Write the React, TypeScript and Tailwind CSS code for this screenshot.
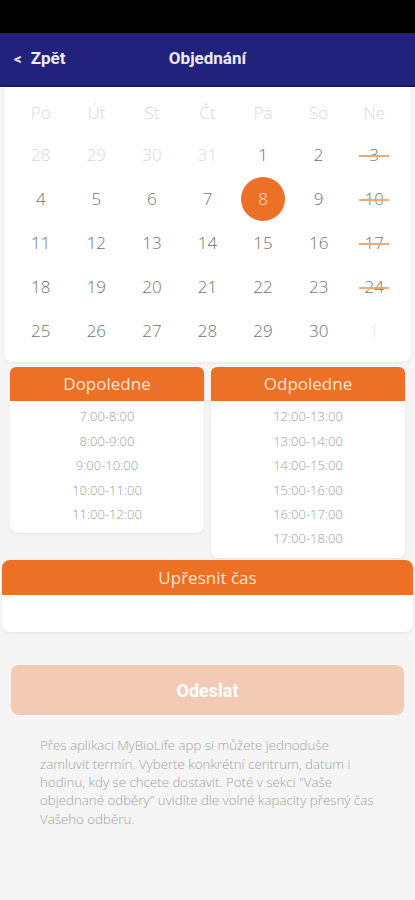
import React from "react";

const SANS = { fontFamily: '"Open Sans", "Noto Sans", sans-serif' };
const ROBOTO = { fontFamily: 'Roboto, "Liberation Sans", sans-serif' };

type Day = { n: number; muted?: boolean; faint?: boolean; struck?: boolean; selected?: boolean };

const weekdays = ["Po", "Út", "St", "Čt", "Pá", "So", "Ne"];

const weeks: Day[][] = [
  [{ n: 28, muted: true }, { n: 29, muted: true }, { n: 30, muted: true }, { n: 31, muted: true }, { n: 1 }, { n: 2 }, { n: 3, struck: true }],
  [{ n: 4 }, { n: 5 }, { n: 6 }, { n: 7 }, { n: 8, selected: true }, { n: 9 }, { n: 10, struck: true }],
  [{ n: 11 }, { n: 12 }, { n: 13 }, { n: 14 }, { n: 15 }, { n: 16 }, { n: 17, struck: true }],
  [{ n: 18 }, { n: 19 }, { n: 20 }, { n: 21 }, { n: 22 }, { n: 23 }, { n: 24, struck: true }],
  [{ n: 25 }, { n: 26 }, { n: 27 }, { n: 28 }, { n: 29 }, { n: 30 }, { n: 1, faint: true }],
];

const morning = ["7:00-8:00", "8:00-9:00", "9:00-10:00", "10:00-11:00", "11:00-12:00"];
const afternoon = ["12:00-13:00", "13:00-14:00", "14:00-15:00", "15:00-16:00", "16:00-17:00", "17:00-18:00"];

function DayCell({ d }: { d: Day }) {
  if (d.selected) {
    return (
      <div className="flex h-[44px] items-center justify-center">
        <div className="flex h-[44px] w-[44px] items-center justify-center rounded-full bg-[#ec7025] text-[17px] font-light text-[#fde3cf]">
          {d.n}
        </div>
      </div>
    );
  }
  const color = d.faint ? "text-[#e6e6e6]" : d.muted ? "text-[#d9d9d9]" : "text-[#727272]";
  return (
    <div className="flex h-[44px] items-center justify-center">
      <span className={`relative text-[17px] font-light ${color}`}>
        {d.n}
        {d.struck && (
          <span className="absolute left-1/2 top-1/2 h-[2px] w-[30px] -translate-x-1/2 bg-[#f2a86f]" />
        )}
      </span>
    </div>
  );
}

function SlotCard({ title, slots, pb }: { title: string; slots: string[]; pb: string }) {
  return (
    <div className={`flex-1 self-start rounded-lg bg-white shadow-[0_1px_3px_rgba(0,0,0,0.08)] ${pb}`}>
      <div className="flex h-[34px] items-center justify-center rounded-t-md bg-[#ec7025] text-[17px] text-[#fde3cf]">
        {title}
      </div>
      <div className="flex flex-col pt-[4px]">
        {slots.map((s) => (
          <div key={s} className="flex h-[24.4px] items-center justify-center text-[13px] font-light text-[#9d9d9d]">
            {s}
          </div>
        ))}
      </div>
    </div>
  );
}

export default function App() {
  return (
    <div className="flex min-h-[900px] w-[415px] flex-col bg-[#f5f5f5]" style={SANS}>
      <div className="h-[33px] bg-black" />
      <div className="flex h-[54px] items-center border-b-2 border-[#18186a] bg-[#22227c] px-[14px] text-[17px] font-bold text-[#ececf6]" style={ROBOTO}>
        <div className="flex w-[100px] items-center gap-[9px]">
          <span className="text-[15px]">&lt;</span>
          <span>Zpět</span>
        </div>
        <div className="flex-1 text-center">Objednání</div>
        <div className="w-[100px]" />
      </div>

      <div className="mx-[4px] rounded-b-lg bg-white px-[9px] pb-[9px] pt-[6px] shadow-[0_1px_3px_rgba(0,0,0,0.06)]">
        <div className="grid h-[40px] grid-cols-7 items-center">
          {weekdays.map((w) => (
            <div key={w} className="text-center text-[17px] font-light text-[#d9d9d9]">
              {w}
            </div>
          ))}
        </div>
        {weeks.map((row, i) => (
          <div key={i} className="grid grid-cols-7">
            {row.map((d, j) => (
              <DayCell key={j} d={d} />
            ))}
          </div>
        ))}
      </div>

      <div className="mt-[5px] flex gap-[7px] px-[10px]">
        <SlotCard title="Dopoledne" slots={morning} pb="pb-[6px]" />
        <SlotCard title="Odpoledne" slots={afternoon} pb="pb-[7px]" />
      </div>

      <div className="mx-[2px] mt-[2px] rounded-lg bg-white shadow-[0_1px_3px_rgba(0,0,0,0.08)]">
        <div className="flex h-[35px] items-center justify-center rounded-t-lg bg-[#ec7025] text-[17px] text-[#fde3cf]">
          Upřesnit čas
        </div>
        <div className="h-[37px]" />
      </div>

      <div className="mx-[11px] mt-[33px] flex h-[50px] items-center justify-center rounded-lg bg-[#f3cbb4] text-[18px] font-bold text-white" style={ROBOTO}>
        Odeslat
      </div>

      <p className="mt-[21px] pl-[40px] pr-[36px] text-[13.3px] font-light leading-[18.3px] text-[#a3a3a3]">
        Přes aplikaci MyBioLife app si můžete jednoduše zamluvit termín. Vyberte konkrétní centrum, datum i hodinu, kdy se chcete dostavit. Poté v sekci "Vaše objednané odběry" uvidíte dle volné kapacity přesný čas Vašeho odběru.
      </p>
    </div>
  );
}
